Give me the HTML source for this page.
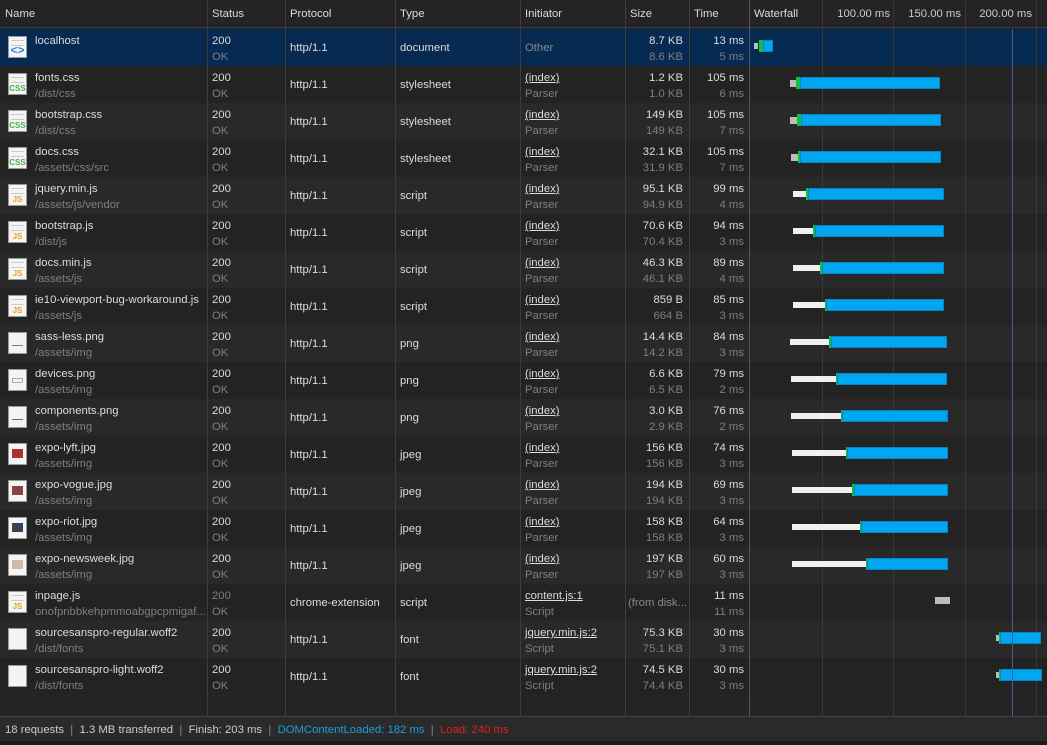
<!DOCTYPE html>
<html><head><meta charset="utf-8"><style>
*{margin:0;padding:0;box-sizing:border-box}
body{width:1047px;height:745px;background:#242424;font-family:"Liberation Sans",sans-serif;font-size:11.3px;color:#dcdcdc;position:relative;overflow:hidden}
.a{position:absolute;white-space:nowrap}
.hd{position:absolute;left:0;top:0;width:1047px;height:28px;background:#242424;border-bottom:1px solid #3c3c3c}
.hd span{position:absolute;top:8px;color:#dcdcdc}
.r{position:absolute;left:0;width:1047px;height:37px}
.r.o{background:#232323}.r.e{background:#292929}.r.s{background:#062a52}
.m{position:absolute;top:6px}
.sb{position:absolute;top:22px;color:#7f7f7f}
.c{position:absolute;top:13px}
.rt{text-align:right}
.u{text-decoration:underline}
.ic{position:absolute;left:8px;top:7px;width:19px;height:22px;background:#f4f4f4;border:1px solid #9a9a9a;font-size:8px;font-weight:bold;text-align:center;line-height:30px}
.ic.css{color:#4caf50}.ic.js{color:#f0a020}
.ic i{position:absolute;left:2px;right:2px;top:3px;height:6px;border-top:1px solid #ccc;border-bottom:1px solid #ccc}
.ic b{position:absolute;left:3px;right:3px;top:8px;height:5px}
.vl{position:absolute;top:0;width:1px;background:#3d3d3d;height:716px;z-index:1}
.g{position:absolute;top:0;width:1px;height:716px;background:#383838;z-index:1}
.b{position:absolute;height:12px;z-index:2}
.bl{background:#00a6f0;border:1px solid #0a84c0}
.gr{background:#10c040}
.wh{background:#f0f0f0}
.gy{background:#bcbcbc}
.ft{position:absolute;left:0;top:716px;width:1047px;height:25px;background:#2a2a2a;border-top:1px solid #444;padding:7px 0 0 5px;color:#ccc;z-index:3}
</style></head><body>
<div class="hd">
<span style="left:5px">Name</span><span style="left:212px">Status</span><span style="left:290px">Protocol</span><span style="left:400px">Type</span><span style="left:525px">Initiator</span><span style="left:630px">Size</span><span style="left:694px">Time</span><span style="left:754px">Waterfall</span><span style="right:157px;color:#ccc">100.00 ms</span><span style="right:86px;color:#ccc">150.00 ms</span><span style="right:15px;color:#ccc">200.00 ms</span>
</div>

<div class="r s" style="top:29px"><div class="ic" style="color:#3a7fd6;font-size:12px;line-height:26px">&lt;&gt;<i></i></div><span class="a m" style="left:35px">localhost</span><span class="a m" style="left:212px">200</span><span class="a sb" style="left:212px">OK</span><span class="a c" style="left:290px">http/1.1</span><span class="a c" style="left:400px">document</span><span class="a c" style="left:525px;color:#8a8a8a">Other</span><span class="a m rt" style="right:364px">8.7 KB</span><span class="a sb rt" style="right:364px">8.6 KB</span><span class="a m rt" style="right:303px">13 ms</span><span class="a sb rt" style="right:303px">5 ms</span><div class="b gy" style="left:754px;top:14px;width:4px;height:6px"></div><div class="b gr" style="left:759px;top:11px;width:4px"></div><div class="b bl" style="left:763px;top:11px;width:10px"></div></div>

<div class="r o" style="top:66px"><div class="ic css"><i></i>CSS</div><span class="a m" style="left:35px">fonts.css</span><span class="a sb" style="left:35px">/dist/css</span><span class="a m" style="left:212px">200</span><span class="a sb" style="left:212px">OK</span><span class="a c" style="left:290px">http/1.1</span><span class="a c" style="left:400px">stylesheet</span><span class="a m u" style="left:525px">(index)</span><span class="a sb" style="left:525px">Parser</span><span class="a m rt" style="right:364px">1.2 KB</span><span class="a sb rt" style="right:364px">1.0 KB</span><span class="a m rt" style="right:303px">105 ms</span><span class="a sb rt" style="right:303px">6 ms</span><div class="b gy" style="left:790px;top:14px;width:6px;height:7px"></div><div class="b gr" style="left:796px;top:11px;width:4px"></div><div class="b bl" style="left:800px;top:11px;width:140px"></div></div>

<div class="r e" style="top:103px"><div class="ic css"><i></i>CSS</div><span class="a m" style="left:35px">bootstrap.css</span><span class="a sb" style="left:35px">/dist/css</span><span class="a m" style="left:212px">200</span><span class="a sb" style="left:212px">OK</span><span class="a c" style="left:290px">http/1.1</span><span class="a c" style="left:400px">stylesheet</span><span class="a m u" style="left:525px">(index)</span><span class="a sb" style="left:525px">Parser</span><span class="a m rt" style="right:364px">149 KB</span><span class="a sb rt" style="right:364px">149 KB</span><span class="a m rt" style="right:303px">105 ms</span><span class="a sb rt" style="right:303px">7 ms</span><div class="b gy" style="left:790px;top:14px;width:7px;height:7px"></div><div class="b gr" style="left:797px;top:11px;width:4px"></div><div class="b bl" style="left:801px;top:11px;width:140px"></div></div>

<div class="r o" style="top:140px"><div class="ic css"><i></i>CSS</div><span class="a m" style="left:35px">docs.css</span><span class="a sb" style="left:35px">/assets/css/src</span><span class="a m" style="left:212px">200</span><span class="a sb" style="left:212px">OK</span><span class="a c" style="left:290px">http/1.1</span><span class="a c" style="left:400px">stylesheet</span><span class="a m u" style="left:525px">(index)</span><span class="a sb" style="left:525px">Parser</span><span class="a m rt" style="right:364px">32.1 KB</span><span class="a sb rt" style="right:364px">31.9 KB</span><span class="a m rt" style="right:303px">105 ms</span><span class="a sb rt" style="right:303px">7 ms</span><div class="b gy" style="left:791px;top:14px;width:7px;height:7px"></div><div class="b gr" style="left:798px;top:11px;width:3px"></div><div class="b bl" style="left:800px;top:11px;width:141px"></div></div>

<div class="r e" style="top:177px"><div class="ic js"><i></i>JS</div><span class="a m" style="left:35px">jquery.min.js</span><span class="a sb" style="left:35px">/assets/js/vendor</span><span class="a m" style="left:212px">200</span><span class="a sb" style="left:212px">OK</span><span class="a c" style="left:290px">http/1.1</span><span class="a c" style="left:400px">script</span><span class="a m u" style="left:525px">(index)</span><span class="a sb" style="left:525px">Parser</span><span class="a m rt" style="right:364px">95.1 KB</span><span class="a sb rt" style="right:364px">94.9 KB</span><span class="a m rt" style="right:303px">99 ms</span><span class="a sb rt" style="right:303px">4 ms</span><div class="b wh" style="left:793px;top:14px;width:13px;height:6px"></div><div class="b gr" style="left:806px;top:11px;width:3px"></div><div class="b bl" style="left:808px;top:11px;width:136px"></div></div>

<div class="r o" style="top:214px"><div class="ic js"><i></i>JS</div><span class="a m" style="left:35px">bootstrap.js</span><span class="a sb" style="left:35px">/dist/js</span><span class="a m" style="left:212px">200</span><span class="a sb" style="left:212px">OK</span><span class="a c" style="left:290px">http/1.1</span><span class="a c" style="left:400px">script</span><span class="a m u" style="left:525px">(index)</span><span class="a sb" style="left:525px">Parser</span><span class="a m rt" style="right:364px">70.6 KB</span><span class="a sb rt" style="right:364px">70.4 KB</span><span class="a m rt" style="right:303px">94 ms</span><span class="a sb rt" style="right:303px">3 ms</span><div class="b wh" style="left:793px;top:14px;width:20px;height:6px"></div><div class="b gr" style="left:813px;top:11px;width:2px"></div><div class="b bl" style="left:815px;top:11px;width:129px"></div></div>

<div class="r e" style="top:251px"><div class="ic js"><i></i>JS</div><span class="a m" style="left:35px">docs.min.js</span><span class="a sb" style="left:35px">/assets/js</span><span class="a m" style="left:212px">200</span><span class="a sb" style="left:212px">OK</span><span class="a c" style="left:290px">http/1.1</span><span class="a c" style="left:400px">script</span><span class="a m u" style="left:525px">(index)</span><span class="a sb" style="left:525px">Parser</span><span class="a m rt" style="right:364px">46.3 KB</span><span class="a sb rt" style="right:364px">46.1 KB</span><span class="a m rt" style="right:303px">89 ms</span><span class="a sb rt" style="right:303px">4 ms</span><div class="b wh" style="left:793px;top:14px;width:27px;height:6px"></div><div class="b gr" style="left:820px;top:11px;width:2px"></div><div class="b bl" style="left:822px;top:11px;width:122px"></div></div>

<div class="r o" style="top:288px"><div class="ic js"><i></i>JS</div><span class="a m" style="left:35px">ie10-viewport-bug-workaround.js</span><span class="a sb" style="left:35px">/assets/js</span><span class="a m" style="left:212px">200</span><span class="a sb" style="left:212px">OK</span><span class="a c" style="left:290px">http/1.1</span><span class="a c" style="left:400px">script</span><span class="a m u" style="left:525px">(index)</span><span class="a sb" style="left:525px">Parser</span><span class="a m rt" style="right:364px">859 B</span><span class="a sb rt" style="right:364px">664 B</span><span class="a m rt" style="right:303px">85 ms</span><span class="a sb rt" style="right:303px">3 ms</span><div class="b wh" style="left:793px;top:14px;width:32px;height:6px"></div><div class="b gr" style="left:825px;top:11px;width:2px"></div><div class="b bl" style="left:826px;top:11px;width:118px"></div></div>

<div class="r e" style="top:325px"><div class="ic"><b style="border-bottom:1px solid #96c"></b></div><span class="a m" style="left:35px">sass-less.png</span><span class="a sb" style="left:35px">/assets/img</span><span class="a m" style="left:212px">200</span><span class="a sb" style="left:212px">OK</span><span class="a c" style="left:290px">http/1.1</span><span class="a c" style="left:400px">png</span><span class="a m u" style="left:525px">(index)</span><span class="a sb" style="left:525px">Parser</span><span class="a m rt" style="right:364px">14.4 KB</span><span class="a sb rt" style="right:364px">14.2 KB</span><span class="a m rt" style="right:303px">84 ms</span><span class="a sb rt" style="right:303px">3 ms</span><div class="b wh" style="left:790px;top:14px;width:39px;height:6px"></div><div class="b gr" style="left:829px;top:11px;width:2px"></div><div class="b bl" style="left:831px;top:11px;width:116px"></div></div>

<div class="r o" style="top:362px"><div class="ic"><b style="border:1px solid #aab"></b></div><span class="a m" style="left:35px">devices.png</span><span class="a sb" style="left:35px">/assets/img</span><span class="a m" style="left:212px">200</span><span class="a sb" style="left:212px">OK</span><span class="a c" style="left:290px">http/1.1</span><span class="a c" style="left:400px">png</span><span class="a m u" style="left:525px">(index)</span><span class="a sb" style="left:525px">Parser</span><span class="a m rt" style="right:364px">6.6 KB</span><span class="a sb rt" style="right:364px">6.5 KB</span><span class="a m rt" style="right:303px">79 ms</span><span class="a sb rt" style="right:303px">2 ms</span><div class="b wh" style="left:791px;top:14px;width:45px;height:6px"></div><div class="b gr" style="left:836px;top:11px;width:2px"></div><div class="b bl" style="left:837px;top:11px;width:110px"></div></div>

<div class="r e" style="top:399px"><div class="ic"><b style="border-bottom:1px solid #75a"></b></div><span class="a m" style="left:35px">components.png</span><span class="a sb" style="left:35px">/assets/img</span><span class="a m" style="left:212px">200</span><span class="a sb" style="left:212px">OK</span><span class="a c" style="left:290px">http/1.1</span><span class="a c" style="left:400px">png</span><span class="a m u" style="left:525px">(index)</span><span class="a sb" style="left:525px">Parser</span><span class="a m rt" style="right:364px">3.0 KB</span><span class="a sb rt" style="right:364px">2.9 KB</span><span class="a m rt" style="right:303px">76 ms</span><span class="a sb rt" style="right:303px">2 ms</span><div class="b wh" style="left:791px;top:14px;width:50px;height:6px"></div><div class="b gr" style="left:841px;top:11px;width:2px"></div><div class="b bl" style="left:842px;top:11px;width:106px"></div></div>

<div class="r o" style="top:436px"><div class="ic"><b style="background:#a33;top:5px;height:9px"></b></div><span class="a m" style="left:35px">expo-lyft.jpg</span><span class="a sb" style="left:35px">/assets/img</span><span class="a m" style="left:212px">200</span><span class="a sb" style="left:212px">OK</span><span class="a c" style="left:290px">http/1.1</span><span class="a c" style="left:400px">jpeg</span><span class="a m u" style="left:525px">(index)</span><span class="a sb" style="left:525px">Parser</span><span class="a m rt" style="right:364px">156 KB</span><span class="a sb rt" style="right:364px">156 KB</span><span class="a m rt" style="right:303px">74 ms</span><span class="a sb rt" style="right:303px">3 ms</span><div class="b wh" style="left:792px;top:14px;width:54px;height:6px"></div><div class="b gr" style="left:846px;top:11px;width:2px"></div><div class="b bl" style="left:847px;top:11px;width:101px"></div></div>

<div class="r e" style="top:473px"><div class="ic"><b style="background:#844;top:5px;height:9px"></b></div><span class="a m" style="left:35px">expo-vogue.jpg</span><span class="a sb" style="left:35px">/assets/img</span><span class="a m" style="left:212px">200</span><span class="a sb" style="left:212px">OK</span><span class="a c" style="left:290px">http/1.1</span><span class="a c" style="left:400px">jpeg</span><span class="a m u" style="left:525px">(index)</span><span class="a sb" style="left:525px">Parser</span><span class="a m rt" style="right:364px">194 KB</span><span class="a sb rt" style="right:364px">194 KB</span><span class="a m rt" style="right:303px">69 ms</span><span class="a sb rt" style="right:303px">3 ms</span><div class="b wh" style="left:792px;top:14px;width:60px;height:6px"></div><div class="b gr" style="left:852px;top:11px;width:2px"></div><div class="b bl" style="left:854px;top:11px;width:94px"></div></div>

<div class="r o" style="top:510px"><div class="ic"><b style="background:#345;top:5px;height:9px"></b></div><span class="a m" style="left:35px">expo-riot.jpg</span><span class="a sb" style="left:35px">/assets/img</span><span class="a m" style="left:212px">200</span><span class="a sb" style="left:212px">OK</span><span class="a c" style="left:290px">http/1.1</span><span class="a c" style="left:400px">jpeg</span><span class="a m u" style="left:525px">(index)</span><span class="a sb" style="left:525px">Parser</span><span class="a m rt" style="right:364px">158 KB</span><span class="a sb rt" style="right:364px">158 KB</span><span class="a m rt" style="right:303px">64 ms</span><span class="a sb rt" style="right:303px">3 ms</span><div class="b wh" style="left:792px;top:14px;width:68px;height:6px"></div><div class="b gr" style="left:860px;top:11px;width:2px"></div><div class="b bl" style="left:861px;top:11px;width:87px"></div></div>

<div class="r e" style="top:547px"><div class="ic"><b style="background:#cba;top:5px;height:9px"></b></div><span class="a m" style="left:35px">expo-newsweek.jpg</span><span class="a sb" style="left:35px">/assets/img</span><span class="a m" style="left:212px">200</span><span class="a sb" style="left:212px">OK</span><span class="a c" style="left:290px">http/1.1</span><span class="a c" style="left:400px">jpeg</span><span class="a m u" style="left:525px">(index)</span><span class="a sb" style="left:525px">Parser</span><span class="a m rt" style="right:364px">197 KB</span><span class="a sb rt" style="right:364px">197 KB</span><span class="a m rt" style="right:303px">60 ms</span><span class="a sb rt" style="right:303px">3 ms</span><div class="b wh" style="left:792px;top:14px;width:74px;height:6px"></div><div class="b gr" style="left:866px;top:11px;width:2px"></div><div class="b bl" style="left:867px;top:11px;width:81px"></div></div>

<div class="r o" style="top:584px"><div class="ic js"><i></i>JS</div><span class="a m" style="left:35px">inpage.js</span><span class="a sb" style="left:35px">onofpnbbkehpmmoabgpcpmigaf...</span><span class="a m" style="left:212px;color:#7f7f7f">200</span><span class="a sb" style="left:212px">OK</span><span class="a c" style="left:290px">chrome-extension</span><span class="a c" style="left:400px">script</span><span class="a m u" style="left:525px">content.js:1</span><span class="a sb" style="left:525px">Script</span><span class="a c rt" style="right:360px;color:#8a8a8a">(from disk...</span><span class="a m rt" style="right:303px">11 ms</span><span class="a sb rt" style="right:303px">11 ms</span><div class="b gy" style="left:935px;top:13px;width:15px;height:7px"></div></div>

<div class="r e" style="top:621px"><div class="ic"></div><span class="a m" style="left:35px">sourcesanspro-regular.woff2</span><span class="a sb" style="left:35px">/dist/fonts</span><span class="a m" style="left:212px">200</span><span class="a sb" style="left:212px">OK</span><span class="a c" style="left:290px">http/1.1</span><span class="a c" style="left:400px">font</span><span class="a m u" style="left:525px">jquery.min.js:2</span><span class="a sb" style="left:525px">Script</span><span class="a m rt" style="right:364px">75.3 KB</span><span class="a sb rt" style="right:364px">75.1 KB</span><span class="a m rt" style="right:303px">30 ms</span><span class="a sb rt" style="right:303px">3 ms</span><div class="b gy" style="left:996px;top:14px;width:4px;height:6px"></div><div class="b gr" style="left:999px;top:11px;width:2px"></div><div class="b bl" style="left:1000px;top:11px;width:41px"></div></div>

<div class="r o" style="top:658px"><div class="ic"></div><span class="a m" style="left:35px">sourcesanspro-light.woff2</span><span class="a sb" style="left:35px">/dist/fonts</span><span class="a m" style="left:212px">200</span><span class="a sb" style="left:212px">OK</span><span class="a c" style="left:290px">http/1.1</span><span class="a c" style="left:400px">font</span><span class="a m u" style="left:525px">jquery.min.js:2</span><span class="a sb" style="left:525px">Script</span><span class="a m rt" style="right:364px">74.5 KB</span><span class="a sb rt" style="right:364px">74.4 KB</span><span class="a m rt" style="right:303px">30 ms</span><span class="a sb rt" style="right:303px">3 ms</span><div class="b gy" style="left:996px;top:14px;width:4px;height:6px"></div><div class="b gr" style="left:999px;top:11px;width:2px"></div><div class="b bl" style="left:1000px;top:11px;width:42px"></div></div>

<div class="vl" style="left:207px"></div><div class="vl" style="left:285px"></div><div class="vl" style="left:395px"></div><div class="vl" style="left:520px"></div><div class="vl" style="left:625px"></div><div class="vl" style="left:689px"></div><div class="vl" style="left:749px;background:#555"></div>
<div class="g" style="left:822px"></div><div class="g" style="left:893px"></div><div class="g" style="left:965px"></div><div class="g" style="left:1036px"></div>
<div class="g" style="left:1012px;top:29px;height:687px;background:#4a5a9a;z-index:3"></div>

<div class="ft">18 requests <span style="color:#888">&nbsp;|&nbsp;</span> 1.3 MB transferred <span style="color:#888">&nbsp;|&nbsp;</span> Finish: 203 ms <span style="color:#888">&nbsp;|&nbsp;</span> <span style="color:#1a9ee0">DOMContentLoaded: 182 ms</span> <span style="color:#888">&nbsp;|&nbsp;</span> <span style="color:#e02020">Load: 240 ms</span></div>
<div class="a" style="left:0;top:741px;width:1047px;height:4px;background:#1b1b1b"></div>
</body></html>
